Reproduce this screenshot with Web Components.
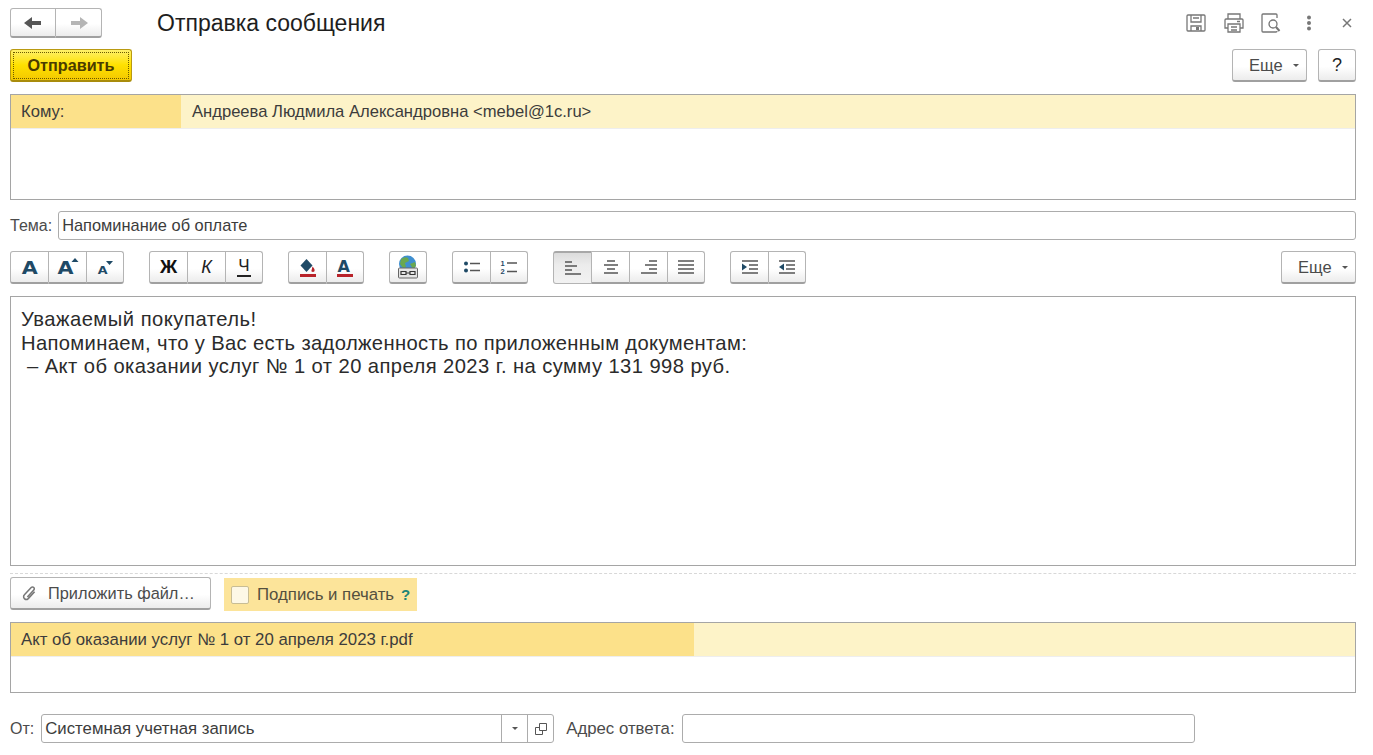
<!DOCTYPE html>
<html lang="ru">
<head>
<meta charset="utf-8">
<title>Отправка сообщения</title>
<style>
  html, body { margin: 0; background: #fff; }
  body { font-family: "Liberation Sans", Arial, sans-serif; color: #333; }
</style>
</head>
<body>
<send-form></send-form>

<script>
// button with the 1C look: light gradient, grey border. attrs: yellow, pressed, grouped
class UiBtn extends HTMLElement {
  constructor() {
    super();
    this.attachShadow({ mode: "open" });
    this.shadowRoot.innerHTML = `
    <style>
      :host {
        display: flex;
        box-sizing: border-box;
        align-items: center;
        justify-content: center;
        height: 33px;
        width: 38px;
        flex: none;
        gap: 8px;
        font-size: 16.500px;
        color: #4b4b4b;
        background: linear-gradient(#fff 0%, #fff 55%, #ececec 100%);
        border: 1px solid #b4b4b4;
        border-bottom: 2px solid #a0a0a0;
        border-radius: 3px;
      }
      :host([grouped]) { border-radius: 0; border-left-width: 0; }
      :host([grouped]:first-child) { width: 39px; border-left-width: 1px; border-radius: 3px 0 0 3px; }
      :host([grouped]:last-child) { width: 37px; border-radius: 0 3px 3px 0; }
      :host([pressed]) {
        background: linear-gradient(#dcdcdc, #ececec 40%, #f2f2f2);
        border-top: 2px solid #a8a8a8;
        border-bottom: 1px solid #b4b4b4;
      }
      :host([yellow]) {
        padding-top: 1px;
        color: #4a3c00;
        font-weight: bold;
        font-size: 16.200px;
        background: linear-gradient(#fff06a 0%, #ffe100 50%, #f3c800 100%);
        border: 1px solid #b99a12;
        border-bottom: 2px solid #a98c0c;
        outline: 1px dotted #6b5a00;
        outline-offset: -4px;
      }
      svg { display: block; }
    </style>
    <slot></slot>`;
  }
}

// little triangle after "Еще" and in combo boxes
class UiCaret extends HTMLElement {
  constructor() {
    super();
    this.attachShadow({ mode: "open" });
    this.shadowRoot.innerHTML = `
    <style>
      :host {
        display: block;
        width: 0; height: 0;
        border-left: 3px solid transparent;
        border-right: 3px solid transparent;
        border-top: 3px solid #555;
      }
    </style>`;
  }
}

class UiGroup extends HTMLElement {
  constructor() {
    super();
    this.attachShadow({ mode: "open" });
    this.shadowRoot.innerHTML = `
    <style>:host { display: flex; flex: none; }</style>
    <slot></slot>`;
  }
}

// bordered list with one highlighted row. attr: mark (width of the darker cell)
class UiList extends HTMLElement {
  constructor() {
    super();
    this.attachShadow({ mode: "open" });
    this.shadowRoot.innerHTML = `
    <style>
      :host {
        display: block;
        box-sizing: border-box;
        border: 1px solid #a5a5a5;
        background: #fff;
        font-size: 16px;
        color: #3c3c3c;
      }
      .row {
        display: flex;
        height: 34px;
        line-height: 33px;
        background: #fdf3c8;
        border-bottom: 1px solid #eee;
        box-sizing: border-box;
      }
      .mark { flex: none; background: #fce18a; padding-left: 10px; box-sizing: border-box; white-space: nowrap; }
      .rest { padding-left: 11px; white-space: nowrap; }
    </style>
    <div class="row">
      <div class="mark" part="mark"><slot name="mark"></slot></div>
      <div class="rest"><slot name="rest"></slot></div>
    </div>`;
  }
  connectedCallback() {
    this.shadowRoot.querySelector(".mark").style.width = this.getAttribute("mark") + "px";
  }
}

// plain text input look
class UiInput extends HTMLElement {
  constructor() {
    super();
    this.attachShadow({ mode: "open" });
    this.shadowRoot.innerHTML = `
    <style>
      :host {
        display: flex;
        align-items: center;
        box-sizing: border-box;
        height: 29px;
        padding: 0 3px;
        border: 1px solid #acacac;
        border-radius: 3px;
        background: #fff;
        font-size: 16.400px;
        color: #3c3c3c;
        white-space: nowrap;
        min-width: 0;
      }
    </style>
    <slot></slot>`;
  }
}

// the bold "A" of the font buttons, real text stretched a bit wider
const fontA = (size, x, y) => `<text x="${x}" y="${y}" transform="scale(1.15 1)" font-family="DejaVu Sans, sans-serif" font-weight="bold" font-size="${size}" fill="#1f4a66">A</text>`;

class SendForm extends HTMLElement {
  constructor() {
    super();
    this.attachShadow({ mode: "open" });
    this.shadowRoot.innerHTML = `
    <style>
      :host { display: block; box-sizing: border-box; width: 1373px; height: 755px; padding: 8px 17px 0 10px; overflow: hidden; }
      .flex { display: flex; align-items: center; }
      .spacer { flex: 1; }

      .head { height: 30px; }
      .head ui-btn { height: 30px; width: 46px; }
      h1 { margin: 0 0 0 55px; font-size: 23px; font-weight: normal; color: #1e1e1e; white-space: nowrap; }
      .tools { gap: 16px; margin-right: 0; }
      .dots { margin: 0 13px 0 9px; }
      .close { margin-right: 3px; }

      .cmd { margin-top: 11px; }
      .cmd ui-btn[yellow] { width: 122px; }
      .more { width: 75px; justify-content: flex-start; padding: 1px 0 0 16px; gap: 10px; }
      .help { width: 38px; margin-left: 11px; font-size: 18px; color: #222; }

      .to { margin-top: 12px; height: 106px; font-size: 16.600px; }
      .subject { margin-top: 11px; font-size: 16px; color: #4b4b4b; }
      .subject ui-input { flex: 1; margin-left: 6px; }

      .fmt { margin-top: 11px; }
      .fmt > ui-group { margin-right: 25px; }

      .editor {
        margin-top: 12px;
        height: 270px;
        box-sizing: border-box;
        border: 1px solid #a5a5a5;
        padding: 11px 10px;
        font-size: 20.200px;
        line-height: 23.500px;
        color: #2b2b2b;
        letter-spacing: .35px;
      }
      .editor div { white-space: pre; }
      .editor .l1 { letter-spacing: .5px; }
      .editor .l3 { letter-spacing: .42px; }

      .dash { margin-top: 7px; border-top: 1px dashed #d8d8d8; }
      .attach { margin-top: 3px; align-items: flex-start; }
      .attach .file { width: 201px; gap: 10px; justify-content: flex-start; padding: 1px 0 0 10px; font-size: 16.350px; }
      .sign {
        margin: 1px 0 0 13px;
        width: 193px;
        height: 33px;
        box-sizing: border-box;
        padding-left: 7px;
        background: #fce49a;
        font-size: 16.800px;
        color: #54503f;
        white-space: nowrap;
      }
      .box { width: 18px; height: 18px; box-sizing: border-box; border: 1px solid #c8bd94; border-radius: 2px; background: #fdf8e6; margin-right: 8px; }
      .q { color: #1d8577; font-weight: bold; margin-left: 7px; font-size: 15px; }

      .files { margin-top: 11px; height: 71px; font-size: 16.800px; }

      .from { margin-top: 21px; font-size: 16.800px; color: #4b4b4b; }
      .from ui-input { font-size: 16.800px; }
      .from .ot { font-size: 16px; }
      .combo { width: 513px; margin-left: 7px; padding-right: 0; }
      .combo span { flex: 1; }
      .cell { width: 26px; height: 27px; box-sizing: border-box; border-left: 1px solid #acacac; display: flex; align-items: center; justify-content: center; flex: none; }
      .reply { margin-left: 12px; }
      .addr { width: 513px; margin-left: 7px; }
    </style>

    <div class="flex head">
      <ui-group>
        <ui-btn grouped>
          <svg width="20" height="14" viewBox="0 0 20 14"><path fill="#555" d="M9 1v4h9v4H9v4L1 7z"/></svg>
        </ui-btn>
        <ui-btn grouped>
          <svg width="20" height="14" viewBox="0 0 20 14"><path fill="#b5b5b5" d="M11 1v4H2v4h9v4l8-6z"/></svg>
        </ui-btn>
      </ui-group>
      <h1>Отправка сообщения</h1>
      <div class="spacer"></div>
      <div class="flex tools">
        <svg width="22" height="20" viewBox="0 0 22 20" fill="none" stroke="#777" stroke-width="1.300"><path d="M3 2h16q1 0 1 1v14q0 1-1 1H3q-1 0-1-1V3q0-1 1-1z"/><path d="M6 2v7h10V2M8 5h6M6 18v-5h10v5"/><rect x="11" y="14" width="3" height="3" fill="#777" stroke="none"/></svg>
        <svg width="22" height="20" viewBox="0 0 22 20" fill="none" stroke="#777" stroke-width="1.300"><path d="M5 6V1h12v5M5 15H2V7q0-1 1-1h16q1 0 1 1v8h-3"/><path d="M5 11h12v8H5zM8 14h6M8 17h6M14 8.500h3"/></svg>
        <svg width="20" height="20" viewBox="0 0 20 20" fill="none" stroke="#777" stroke-width="1.300"><path d="M15 1H2q-1 0-1 1v16q0 1 1 1h13q1 0 1-1M15 1q1 0 1 1v3"/><circle cx="12" cy="11" r="4"/><path d="M15 14l3.500 4" stroke-width="2"/></svg>
        <svg class="dots" width="6" height="16" viewBox="0 0 6 16"><g fill="#777"><circle cx="3" cy="2.500" r="2"/><circle cx="3" cy="8" r="2"/><circle cx="3" cy="13.500" r="2"/></g></svg>
        <svg class="close" width="12" height="12" viewBox="0 0 12 12" fill="none" stroke="#777" stroke-width="1.500"><path d="M2 2l8 8M10 2l-8 8"/></svg>
      </div>
    </div>

    <div class="flex cmd">
      <ui-btn yellow>Отправить</ui-btn>
      <div class="spacer"></div>
      <ui-btn class="more">Еще <ui-caret></ui-caret></ui-btn>
      <ui-btn class="help">?</ui-btn>
    </div>

    <ui-list class="to" mark="170">
      <span slot="mark">Кому:</span>
      <span slot="rest">Андреева Людмила Александровна &lt;mebel@1c.ru&gt;</span>
    </ui-list>

    <div class="flex subject">
      <span>Тема:</span>
      <ui-input>Напоминание об оплате</ui-input>
    </div>

    <div class="flex fmt">
      <ui-group>
        <ui-btn grouped>
          <svg width="20" height="26" viewBox="0 0 20 26">${fontA(18, 1.500, 20)}</svg>
        </ui-btn>
        <ui-btn grouped>
          <svg width="22" height="26" viewBox="0 0 22 26">${fontA(18, 0.500, 20)}<path fill="#1f4a66" d="M18 4l3.500 4h-7z"/></svg>
        </ui-btn>
        <ui-btn grouped>
          <svg width="18" height="18" viewBox="0 0 18 18">${fontA(11, 1.500, 16)}<path fill="#1f4a66" d="M10 3h7l-3.500 4z"/></svg>
        </ui-btn>
      </ui-group>
      <ui-group>
        <ui-btn grouped style="font:bold 19px 'Liberation Sans',sans-serif;color:#111">Ж</ui-btn>
        <ui-btn grouped style="font:italic 18px 'Liberation Sans',sans-serif;color:#222">К</ui-btn>
        <ui-btn grouped style="font-size:17px;color:#222"><span style="border-bottom:2px solid #222;line-height:18px;padding:0 1px">Ч</span></ui-btn>
      </ui-group>
      <ui-group>
        <ui-btn grouped>
          <svg width="20" height="20" viewBox="0 0 20 20"><path fill="#1f4a66" d="M8.500 2l6 6.500-6 6.500-6-6.500z"/><path fill="#b8232a" d="M14.500 9.500q3 3 1.800 5-1.500 1-3-.3z"/><rect x="2" y="17" width="16" height="3" fill="#b8232a"/></svg>
        </ui-btn>
        <ui-btn grouped>
          <svg width="20" height="22" viewBox="0 0 20 22"><text x="2.500" y="16" font-family="DejaVu Sans, sans-serif" font-weight="bold" font-size="16" fill="#1f4a66">A</text><rect x="2" y="18" width="16" height="3" fill="#b8232a"/></svg>
        </ui-btn>
      </ui-group>
      <ui-group>
        <ui-btn>
          <svg width="22" height="24" viewBox="0 0 22 24"><circle cx="10.500" cy="9" r="8.500" fill="#3f8fd0"/><path fill="#6aa84f" d="M4 4q4-3 7-1l1 3-4 2 1 4-3 1-3-4zM13 9l5-2 1 4-3 3z"/><rect x="1.500" y="13" width="19" height="10" rx="1" fill="#e4e4e4" stroke="#666"/><path fill="none" stroke="#333" stroke-width="1.200" d="M4 16.500h5v3H4zM13 16.500h5v3h-5zM9 18h4"/></svg>
        </ui-btn>
      </ui-group>
      <ui-group>
        <ui-btn grouped>
          <svg width="16" height="12" viewBox="0 0 16 12"><g fill="#1f4a66"><circle cx="2" cy="2.500" r="2"/><circle cx="2" cy="9.500" r="2"/></g><path stroke="#555" stroke-width="1.300" d="M6 2.500h10M6 9.500h10"/></svg>
        </ui-btn>
        <ui-btn grouped>
          <svg width="18" height="18" viewBox="0 0 18 18"><g font-family="Liberation Sans, sans-serif" font-weight="bold" font-size="7.500" fill="#1f4a66"><text x="0.500" y="7.500">1</text><text x="0.500" y="16.200">2</text></g><path stroke="#555" stroke-width="1.300" d="M7 5h10M7 13.500h10"/></svg>
        </ui-btn>
      </ui-group>
      <ui-group>
        <ui-btn grouped pressed>
          <svg width="16" height="14" viewBox="0 0 16 14" stroke="#555" stroke-width="1.400"><path d="M0 1h7M0 5h12M0 9h7M0 13h16"/></svg>
        </ui-btn>
        <ui-btn grouped>
          <svg width="16" height="14" viewBox="0 0 16 14" stroke="#555" stroke-width="1.400"><path d="M4 1h8M1 5h14M4 9h8M1 13h14"/></svg>
        </ui-btn>
        <ui-btn grouped>
          <svg width="16" height="14" viewBox="0 0 16 14" stroke="#555" stroke-width="1.400"><path d="M8 1h8M4 5h12M8 9h8M0 13h16"/></svg>
        </ui-btn>
        <ui-btn grouped>
          <svg width="16" height="14" viewBox="0 0 16 14" stroke="#555" stroke-width="1.400"><path d="M0 1h16M0 5h16M0 9h16M0 13h16"/></svg>
        </ui-btn>
      </ui-group>
      <ui-group>
        <ui-btn grouped>
          <svg width="16" height="14" viewBox="0 0 16 14"><path stroke="#555" stroke-width="1.400" d="M0 1h16M7 5h9M7 9h9M0 13h16"/><path fill="#1f4a66" d="M0 3.500L5 7 0 10.500z"/></svg>
        </ui-btn>
        <ui-btn grouped>
          <svg width="16" height="14" viewBox="0 0 16 14"><path stroke="#555" stroke-width="1.400" d="M0 1h16M7 5h9M7 9h9M0 13h16"/><path fill="#1f4a66" d="M5 3.500L0 7l5 3.500z"/></svg>
        </ui-btn>
      </ui-group>
      <div class="spacer"></div>
      <ui-btn class="more">Еще <ui-caret></ui-caret></ui-btn>
    </div>

    <div class="editor">
      <div class="l1">Уважаемый покупатель!</div>
      <div>Напоминаем, что у Вас есть задолженность по приложенным документам:</div>
      <div class="l3"> – Акт об оказании услуг № 1 от 20 апреля 2023 г. на сумму 131 998 руб.</div>
    </div>

    <div class="dash"></div>

    <div class="flex attach">
      <ui-btn class="file">
        <svg width="17" height="17" viewBox="0 0 20 20" fill="none" stroke="#777" stroke-width="1.800"><path d="M16 8l-7.500 8a3 3 0 0 1-4.500-4.500L12 3a2 2 0 0 1 3 3l-7.500 8"/></svg>
        <span>Приложить файл…</span>
      </ui-btn>
      <div class="flex sign">
        <div class="box"></div>
        <span>Подпись и печать</span>
        <span class="q">?</span>
      </div>
    </div>

    <ui-list class="files" mark="683">
      <span slot="mark">Акт об оказании услуг № 1 от 20 апреля 2023 г.pdf</span>
    </ui-list>

    <div class="flex from">
      <span class="ot">От:</span>
      <ui-input class="combo">
        <span>Системная учетная запись</span>
        <div class="cell"><ui-caret></ui-caret></div>
        <div class="cell">
          <svg width="14" height="14" viewBox="0 0 14 14" fill="#fff" stroke="#555"><path d="M1.500 5.500h7v7h-7z"/><path d="M5.500 1.500h7v7h-7z"/></svg>
        </div>
      </ui-input>
      <span class="reply">Адрес ответа:</span>
      <ui-input class="addr"></ui-input>
    </div>`;
  }
}

customElements.define("ui-btn", UiBtn);
customElements.define("ui-caret", UiCaret);
customElements.define("ui-group", UiGroup);
customElements.define("ui-list", UiList);
customElements.define("ui-input", UiInput);
customElements.define("send-form", SendForm);
</script>
</body>
</html>
